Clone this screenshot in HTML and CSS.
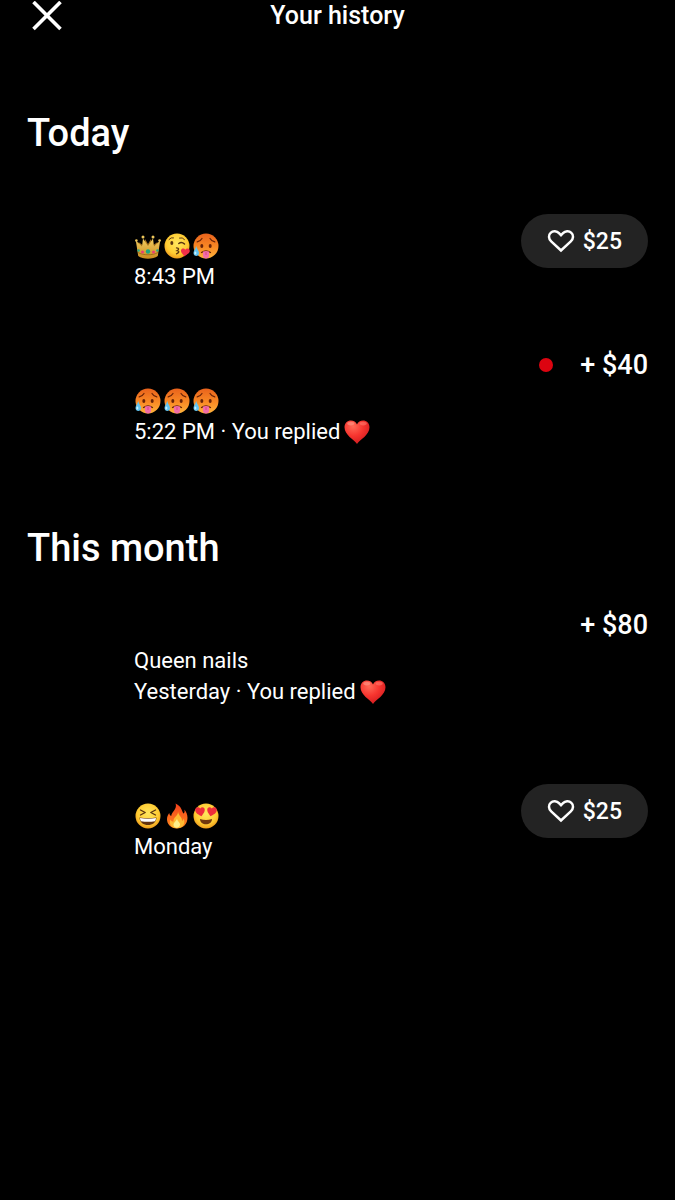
FILE: index.html
```html
<!DOCTYPE html>
<html lang="en">
<head>
    <meta charset="UTF-8">
    <meta name="viewport" content="width=device-width, initial-scale=1.0">
    <title>Your history</title>
    <link rel="stylesheet" href="styles.css">
</head>
<body>
    <!-- Shared emoji and icon shapes -->
    <svg class="sprite" aria-hidden="true">
        <defs>
            <radialGradient id="yellow" cx="50%" cy="40%" r="60%">
                <stop offset="0" stop-color="#ffe75e"/>
                <stop offset="0.7" stop-color="#ffcb32"/>
                <stop offset="1" stop-color="#ee9b1c"/>
            </radialGradient>
            <linearGradient id="hot" x1="0" y1="0" x2="0" y2="1">
                <stop offset="0" stop-color="#e9621c"/>
                <stop offset="0.55" stop-color="#f98a25"/>
                <stop offset="1" stop-color="#ffb43c"/>
            </linearGradient>
            <linearGradient id="gold" x1="0" y1="0" x2="0" y2="1">
                <stop offset="0" stop-color="#f3ce60"/>
                <stop offset="1" stop-color="#c98c1f"/>
            </linearGradient>
            <radialGradient id="red" cx="35%" cy="25%" r="80%">
                <stop offset="0" stop-color="#ff6a57"/>
                <stop offset="0.5" stop-color="#f7352f"/>
                <stop offset="1" stop-color="#cf1a1e"/>
            </radialGradient>
            <linearGradient id="flame" x1="0" y1="0" x2="0" y2="1">
                <stop offset="0" stop-color="#f4401c"/>
                <stop offset="1" stop-color="#ff8a1e"/>
            </linearGradient>
        </defs>

        <symbol id="heart-outline" viewBox="0 0 28 24">
            <path d="M14 21.5 4.2 12.3C1.4 9.6 1.3 5.9 3.6 3.8 6.1 1.4 9.8 1.8 12 4.2L14 6.3 16 4.2C18.2 1.8 21.9 1.4 24.4 3.8 26.7 5.9 26.6 9.6 23.8 12.3Z" fill="none" stroke="currentColor" stroke-width="2.5" stroke-linejoin="miter"/>
        </symbol>

        <symbol id="red-heart" viewBox="0 0 26 26">
            <path d="M13 25C10 20.5 0.5 16 0.5 8.2 0.5 4 3.5 1.5 6.9 1.5 9.6 1.5 12 3 13 5.6 14 3 16.4 1.5 19.1 1.5 22.5 1.5 25.5 4 25.5 8.2 25.5 16 16 20.5 13 25Z" fill="url(#red)"/>
            <ellipse cx="6.8" cy="4.6" rx="3.6" ry="1.8" fill="#ff9b8b" opacity="0.6"/>
            <ellipse cx="19.2" cy="4.6" rx="3.6" ry="1.8" fill="#ff8577" opacity="0.5"/>
        </symbol>

        <symbol id="crown" viewBox="0 0 26 26">
            <path d="M4 22 3.5 9 9 13 10 6 13 11 16 6 17 13 22.5 9 22 22Z" fill="#a8731c"/>
            <path d="M3.2 23 0.8 7.5 7 13.5 8 5.5 13 13 18 5.5 19 13.5 25.2 7.5 22.8 23C18 26.5 8 26.5 3.2 23Z" fill="url(#gold)"/>
            <path d="M3 19.5C8 22.5 18 22.5 23 19.5" fill="none" stroke="#8e5c14" stroke-width="0.7"/>
            <g fill="#edc65b">
                <circle cx="1.4" cy="7.5" r="1.3"/>
                <circle cx="8" cy="4" r="1.5"/>
                <circle cx="18" cy="4" r="1.5"/>
                <circle cx="24.6" cy="7.5" r="1.3"/>
            </g>
            <circle cx="13" cy="18.5" r="2.2" fill="#19a783"/>
            <circle cx="7.5" cy="19" r="1.5" fill="#e83f75"/>
            <circle cx="18.5" cy="19" r="1.5" fill="#e83f75"/>
            <circle cx="3.6" cy="17.5" r="1.2" fill="#27ad8a"/>
            <circle cx="22.4" cy="17.5" r="1.2" fill="#27ad8a"/>
        </symbol>

        <symbol id="kiss" viewBox="0 0 26 26">
            <circle cx="13" cy="13" r="12.5" fill="url(#yellow)"/>
            <g fill="none" stroke="#5b3510" stroke-linecap="round">
                <path d="M5 6.5Q7 4 9.5 4.8M15.5 5Q18.5 4 20.5 6.5" stroke-width="1"/>
                <path d="M14.8 10.5Q17.5 8.2 20.5 11" stroke-width="1.5"/>
                <path d="M12.5 14.8Q16.5 15.5 13 17.7 17 18.5 12.5 20.8" stroke-width="1.3"/>
            </g>
            <ellipse cx="7.8" cy="10" rx="1.5" ry="2" fill="#5b3510"/>
            <path d="M20.5 23.5C19.5 21.5 16.5 20 17 17.2 17.5 15 20.2 14.8 21.2 16.7 22.7 14.8 25.8 15.5 25.8 18 25.8 20.7 22 21.6 20.5 23.5Z" fill="#f12f48"/>
        </symbol>

        <symbol id="hot-face" viewBox="0 0 26 26">
            <circle cx="13" cy="13" r="12.5" fill="url(#hot)"/>
            <g fill="none" stroke="#682207" stroke-linecap="round">
                <path d="M4.2 8.8Q7.5 8.3 9 5.5M17 5.5Q18.5 8.3 21.8 8.8" stroke-width="1.2"/>
                <path d="M8.5 19.5Q13 16.5 17.5 19.5" stroke-width="1.3"/>
            </g>
            <ellipse cx="8.8" cy="13" rx="1.5" ry="1.9" fill="#682207"/>
            <ellipse cx="17.2" cy="13" rx="1.5" ry="1.9" fill="#682207"/>
            <path d="M10 18.6Q13 17.6 16 18.6V22.6Q16 25.5 13 25.5 10 25.5 10 22.6Z" fill="#f36ca8"/>
            <path d="M13 19V22" stroke="#cf3e80" stroke-width="0.8"/>
            <path d="M3.2 13C3.8 16 6 17.4 6 20 6 24 0.5 24 0.5 20 0.5 17.4 2.7 16 3.2 13Z" fill="#62c5f2"/>
            <ellipse cx="2.4" cy="20" rx="1" ry="1.5" fill="#c8f0ff"/>
        </symbol>

        <symbol id="laugh" viewBox="0 0 26 26">
            <circle cx="13" cy="13" r="12.5" fill="url(#yellow)"/>
            <path d="M5.5 7 10.2 9.5 5.5 12M20.5 7 15.8 9.5 20.5 12" fill="none" stroke="#5b3510" stroke-width="1.4" stroke-linecap="round" stroke-linejoin="round"/>
            <path d="M4.5 14.5Q13 16 21.5 14.5C21.5 24.5 4.5 24.5 4.5 14.5Z" fill="#63330f"/>
            <path d="M5 15Q13 16.500 21 15 21 17 20 18.300 13 19.300 6 18.300 5 17 5 15Z" fill="#fff"/>
        </symbol>

        <symbol id="fire" viewBox="0 0 26 26">
            <path d="M11.5 0.5C18 3.5 17.5 8 19.5 10.5 20.7 9.8 20.8 8 20.3 6.5 24 10 25 18 20.5 22.5 16.5 26.5 9 26.5 5.5 22.5 1.5 18 3 12.5 5.3 10 5.5 11.5 6 12.5 7.2 13 8 8.5 13.5 6 11.5 0.5Z" fill="url(#flame)"/>
            <path d="M14 8.5C14.5 13 18.5 14 18 18 19 17.5 19.5 16.5 19.7 15.5 22 21 18 25.3 13 25.3 7.5 25.3 4.5 20.5 6.5 16.5 7 18 8 18.7 9.5 18.5 9 14 14.5 13 14 8.5Z" fill="#ffba32"/>
            <path d="M13 15.5C13.3 18.5 16.5 19.5 16 22 15.4 26 9.5 25.5 9.5 21.8 9.5 19.5 12.5 18.2 13 15.5Z" fill="#fff08a"/>
        </symbol>

        <symbol id="heart-eyes" viewBox="0 0 26 26">
            <circle cx="13" cy="13" r="12.5" fill="url(#yellow)"/>
            <path d="M8.5 13.2C6 12 2.5 10.4 2.2 7.3 2 4.2 5.5 3 7.2 5.5 8.8 3.2 12.2 4.2 11.7 7.5 11.4 10 9.5 11.4 8.5 13.2Z" fill="#ee2d3b"/>
            <path d="M17.5 13.2C20 12 23.5 10.4 23.8 7.3 24 4.2 20.5 3 18.8 5.5 17.2 3.2 13.8 4.2 14.3 7.5 14.6 10 16.5 11.4 17.5 13.2Z" fill="#ee2d3b"/>
            <path d="M7 16Q13 18 19 16C19 23 7 23 7 16Z" fill="#70370f"/>
        </symbol>
    </svg>

    <header class="header">
        <button class="close" type="button" aria-label="Close">
            <svg class="close-icon" viewBox="0 0 30 30" aria-hidden="true">
                <path d="M1.5 1 28.5 28M28.5 1 1.5 28" stroke="currentColor" stroke-width="3.6"/>
            </svg>
        </button>
        <h1 class="title">Your history</h1>
    </header>

    <main class="history">
        <section class="group">
            <h2 class="group-title">Today</h2>
            <ul class="list">
                <li class="entry">
                    <div class="details">
                        <p class="line emojis">
                            <svg class="emoji" role="img" aria-label="crown"><use href="#crown"/></svg>
                            <svg class="emoji" role="img" aria-label="face blowing a kiss"><use href="#kiss"/></svg>
                            <svg class="emoji" role="img" aria-label="hot face"><use href="#hot-face"/></svg>
                        </p>
                        <p class="line">8:43 PM</p>
                    </div>
                    <button class="like" type="button">
                        <svg class="like-icon" aria-hidden="true"><use href="#heart-outline"/></svg>
                        $25
                    </button>
                </li>
                <li class="entry">
                    <div class="details">
                        <p class="line emojis">
                            <svg class="emoji" role="img" aria-label="hot face"><use href="#hot-face"/></svg>
                            <svg class="emoji" role="img" aria-label="hot face"><use href="#hot-face"/></svg>
                            <svg class="emoji" role="img" aria-label="hot face"><use href="#hot-face"/></svg>
                        </p>
                        <p class="line replied">5:22 PM · You replied <svg class="emoji" role="img" aria-label="red heart"><use href="#red-heart"/></svg></p>
                    </div>
                    <div class="amount"><span class="dot"></span>+ $40</div>
                </li>
            </ul>
        </section>

        <section class="group">
            <h2 class="group-title">This month</h2>
            <ul class="list">
                <li class="entry">
                    <div class="details">
                        <p class="line">Queen nails</p>
                        <p class="line replied">Yesterday · You replied <svg class="emoji" role="img" aria-label="red heart"><use href="#red-heart"/></svg></p>
                    </div>
                    <div class="amount">+ $80</div>
                </li>
                <li class="entry">
                    <div class="details">
                        <p class="line emojis">
                            <svg class="emoji" role="img" aria-label="laughing face"><use href="#laugh"/></svg>
                            <svg class="emoji" role="img" aria-label="fire"><use href="#fire"/></svg>
                            <svg class="emoji" role="img" aria-label="heart eyes"><use href="#heart-eyes"/></svg>
                        </p>
                        <p class="line">Monday</p>
                    </div>
                    <button class="like" type="button">
                        <svg class="like-icon" aria-hidden="true"><use href="#heart-outline"/></svg>
                        $25
                    </button>
                </li>
            </ul>
        </section>
    </main>
</body>
</html>
```
FILE: styles.css
```css
* {
    box-sizing: border-box;
}

body {
    margin: 0;
    min-height: 100vh;
    background: #000;
    color: #fff;
    font-family: Roboto, "Liberation Sans", sans-serif;
    font-size: 22px;
}

h1, h2, p, ul {
    margin: 0;
    padding: 0;
}

/* Not display: none, the gradients have to stay usable */
.sprite {
    position: absolute;
    width: 0;
    height: 0;
}

.header {
    display: grid;
    grid-template-columns: 40px 1fr 40px;
    align-items: center;
    height: 30px;
    padding: 0 27px;
}

.close {
    display: flex;
    justify-content: center;
    padding: 0;
    border: 0;
    background: none;
    color: #fff;
    cursor: pointer;
}

.close-icon {
    width: 30px;
    height: 30px;
}

.title {
    font-size: 25px;
    font-weight: 500;
    line-height: 32px;
    text-align: center;
}

.history {
    padding: 80px 27px 32px;
}

.group + .group {
    margin-top: 47px;
}

.group-title {
    margin-bottom: 12px;
    font-size: 38px;
    font-weight: 500;
    line-height: 46px;
}

.list {
    list-style: none;
}

.entry {
    display: flex;
    justify-content: space-between;
    align-items: flex-start;
    gap: 16px;
    min-height: 155px;
    padding-left: 107px;
}

.details {
    padding-top: 62px;
}

.line {
    line-height: 31px;
}

.emojis,
.replied {
    display: flex;
    align-items: center;
    min-height: 31px;
}

.emojis {
    gap: 3px;
    padding-left: 1px;
}

.replied {
    gap: 4px;
}

.emoji {
    flex: none;
    width: 26px;
    height: 26px;
}

.like {
    display: flex;
    align-items: center;
    gap: 8px;
    height: 54px;
    margin-top: 46px;
    padding: 0 26px;
    border: 0;
    border-radius: 27px;
    background: #232323;
    color: #fff;
    font-family: inherit;
    font-size: 23px;
    font-weight: 500;
    cursor: pointer;
}

.like-icon {
    width: 28px;
    height: 24px;
}

.amount {
    display: flex;
    align-items: center;
    margin-top: 26px;
    font-size: 27px;
    font-weight: 500;
    line-height: 32px;
}

.dot {
    width: 14px;
    height: 14px;
    margin-right: 27px;
    border-radius: 50%;
    background: #dc0410;
}
```
